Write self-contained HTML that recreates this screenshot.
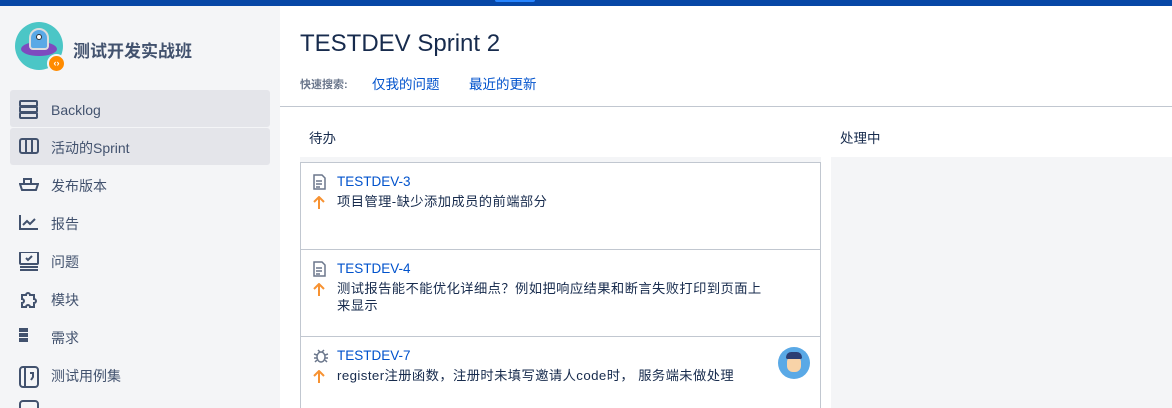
<!DOCTYPE html>
<html><head><meta charset="utf-8"><style>
*{margin:0;padding:0;box-sizing:border-box}
html,body{width:1172px;height:408px;overflow:hidden}
body{background:#fff;font-family:"Liberation Sans","Noto Sans CJK SC",sans-serif;position:relative}
.top{position:absolute;left:0;top:0;width:1172px;height:6px;background:#0747a6}
.tab{position:absolute;left:495px;top:0;width:40px;height:2px;background:#2684ff;border-radius:0 0 3px 3px}
.side{position:absolute;left:0;top:6px;width:280px;height:402px;background:#f4f5f7}
.logo{position:absolute;left:15px;top:22px;width:48px;height:48px;border-radius:50%;background:#4bc6c6}
.title{position:absolute;left:73px;top:37px;font-size:17px;font-weight:bold;color:#42526e}
.nav{position:absolute;left:10px;width:260px;height:37px;border-radius:3px;font-size:14px;color:#42526e;line-height:41px;padding-left:41px}
.nav.sel{background:#e4e5ea}
.ic{position:absolute;left:9px;top:10px}
h1{position:absolute;left:300px;top:30px;font-size:24px;font-weight:normal;color:#172b4d}
.qs{position:absolute;top:73px;font-size:13.5px}
.hr{position:absolute;left:280px;top:106px;width:892px;height:1px;background:#c1c7d0}
.colh{position:absolute;top:127px;font-size:13.5px;color:#172b4d}
.col{position:absolute;top:157px;background:#f4f5f7;height:251px}
.card{position:absolute;left:300px;width:521px;background:#fff;border:1px solid #c1c7d0}
.key{position:absolute;left:36px;top:11px;font-size:13.5px;color:#0052cc}
.sum{position:absolute;left:36px;top:30px;font-size:13.3px;letter-spacing:0.4px;color:#172b4d;line-height:17px;width:460px}
.arr{position:absolute;left:12px;top:33px}
.ti{position:absolute;left:12px;top:11px}
</style></head><body>
<div class="top"></div><div class="tab"></div>
<div class="side"></div>
<div class="logo"><div style="position:absolute;left:6px;top:20px;width:36px;height:14px;border-radius:50%;background:#7e4bbf"></div><div style="position:absolute;left:14px;top:6px;width:20px;height:22px;border-radius:10px 10px 4px 4px;background:#5aa9e6;border:2px solid #ddd"></div><div style="position:absolute;left:21px;top:12px;width:6px;height:6px;border-radius:50%;background:#fff;border:1.5px solid #333"></div><div style="position:absolute;left:32px;top:32px;width:19px;height:19px;border-radius:50%;background:#ff8b00;border:2px solid #f4f5f7;color:#fff;font-size:9px;text-align:center;line-height:15px;font-weight:bold">‹›</div></div>
<div class="title">测试开发实战班</div>
<div class="nav sel" style="top:90px">Backlog<svg class="ic" width="20" height="20" viewBox="0 0 20 20" fill="none" stroke="#42526e" stroke-width="2"><rect x="1" y="1" width="17" height="5" rx="1"/><rect x="1" y="7" width="17" height="5" rx="1"/><rect x="1" y="13" width="17" height="5" rx="1"/></svg></div>
<div class="nav sel" style="top:128px">活动的Sprint<svg class="ic" width="20" height="20" viewBox="0 0 20 20" fill="none" stroke="#42526e" stroke-width="2"><rect x="1" y="1" width="18" height="14" rx="2"/><path d="M7 1v14M13 1v14"/></svg></div>
<div class="nav" style="top:166px">发布版本<svg class="ic" width="20" height="20" viewBox="0 0 20 20" fill="none" stroke="#42526e" stroke-width="2"><path d="M5 8V3h7v5M1 8h18l-2 6H3z"/></svg></div>
<div class="nav" style="top:204px">报告<svg class="ic" width="20" height="20" viewBox="0 0 20 20" fill="none" stroke="#42526e" stroke-width="2"><path d="M1 1v14h18M4 11l4-4 3 3 5-5"/></svg></div>
<div class="nav" style="top:242px">问题<svg class="ic" width="20" height="20" viewBox="0 0 20 20" fill="none" stroke="#42526e" stroke-width="2"><rect x="1" y="0" width="18" height="12" rx="1"/><path d="M7 6l2 2 4-4M1 15h18M1 18h18"/></svg></div>
<div class="nav" style="top:280px">模块<svg class="ic" width="20" height="20" viewBox="0 0 20 20" fill="none" stroke="#42526e" stroke-width="2"><path d="M3 5h4a2 2 0 1 1 4 0h4v4a2 2 0 1 1 0 4v4h-4a2 2 0 1 0-4 0H3v-4a2 2 0 1 0 0-4z"/></svg></div>
<div class="nav" style="top:318px">需求<svg class="ic" width="20" height="20" viewBox="0 0 20 20" fill="#42526e"><rect x="0" y="0" width="9" height="4"/><rect x="0" y="5" width="9" height="4"/><rect x="0" y="10" width="9" height="4"/></svg></div>
<div class="nav" style="top:356px">测试用例集<svg class="ic" width="22" height="22" viewBox="0 0 22 22" fill="none" stroke="#42526e" stroke-width="2"><rect x="1" y="1" width="18" height="20" rx="3"/><path d="M6 1v20M11 7h3v4l-2 3"/></svg></div>
<svg style="position:absolute;left:19px;top:400px" width="22" height="8" viewBox="0 0 22 8" fill="none" stroke="#42526e" stroke-width="2"><path d="M1 8V4a3 3 0 0 1 3-3h12a3 3 0 0 1 3 3v4"/></svg>
<h1>TESTDEV Sprint 2</h1>
<div class="qs" style="left:300px;top:76px;font-size:11px;color:#6b778c;font-weight:bold">快速搜索:</div>
<div class="qs" style="left:372px;color:#0052cc">仅我的问题</div>
<div class="qs" style="left:469px;color:#0052cc">最近的更新</div>
<div class="hr"></div>
<div class="colh" style="left:309px">待办</div>
<div class="colh" style="left:840px">处理中</div>
<div class="col" style="left:300px;width:521px"></div>
<div class="col" style="left:831px;width:341px"></div>
<div class="card" style="top:162px;height:88px"><svg class="ti" width="14" height="16" viewBox="0 0 14 16" fill="none" stroke="#6b778c" stroke-width="1.5"><path d="M1 1h8l3 3v11H1z"/><path d="M3 7h6M3 10h6M3 13h4"/></svg><div class="key">TESTDEV-3</div><svg class="arr" width="12" height="13" viewBox="0 0 12 13" fill="none" stroke="#f79232" stroke-width="2"><path d="M6 13V2M1 6l5-5 5 5"/></svg><div class="sum">项目管理-缺少添加成员的前端部分</div></div>
<div class="card" style="top:249px;height:88px"><svg class="ti" width="14" height="16" viewBox="0 0 14 16" fill="none" stroke="#6b778c" stroke-width="1.5"><path d="M1 1h8l3 3v11H1z"/><path d="M3 7h6M3 10h6M3 13h4"/></svg><div class="key">TESTDEV-4</div><svg class="arr" width="12" height="13" viewBox="0 0 12 13" fill="none" stroke="#f79232" stroke-width="2"><path d="M6 13V2M1 6l5-5 5 5"/></svg><div class="sum">测试报告能不能优化详细点？例如把响应结果和断言失败打印到页面上<br>来显示</div></div>
<div class="card" style="top:336px;height:72px;border-bottom:none"><svg class="ti" width="16" height="16" viewBox="0 0 16 16" fill="none" stroke="#6b778c" stroke-width="1.5"><ellipse cx="8" cy="9" rx="4" ry="5"/><path d="M1 6l3 1M1 10h3M2 14l2-2M15 6l-3 1M15 10h-3M14 14l-2-2M5 2l2 2M11 2l-2 2"/></svg><div class="key">TESTDEV-7</div><svg class="arr" width="12" height="13" viewBox="0 0 12 13" fill="none" stroke="#f79232" stroke-width="2"><path d="M6 13V2M1 6l5-5 5 5"/></svg><div class="sum">register注册函数，注册时未填写邀请人code时， 服务端未做处理</div>
<div style="position:absolute;left:477px;top:10px;width:32px;height:32px;border-radius:50%;background:#5aa9e6;overflow:hidden"><div style="position:absolute;left:9px;top:9px;width:14px;height:16px;border-radius:6px;background:#f8d3a8"></div><div style="position:absolute;left:8px;top:5px;width:16px;height:7px;border-radius:6px 6px 2px 2px;background:#2c3e73"></div></div></div>
</body></html>
